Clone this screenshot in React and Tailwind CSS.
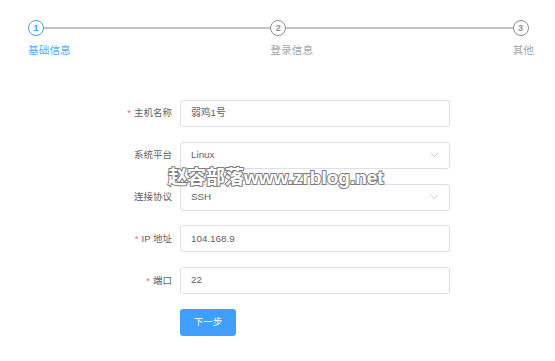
import React from "react";

const FONT = { fontFamily: '"Liberation Sans", "Noto Sans CJK SC", sans-serif' };

function Step({ n, title, active, last }) {
  const color = active ? "text-[#409EFF]" : "text-[#8e9096]";
  const border = active ? "border-[#409EFF]" : "border-[#8e9096]";
  return (
    <div className={last ? "shrink-0" : "flex-1"}>
      <div className="flex items-center h-[16px]">
        <div
          className={`w-[16px] h-[16px] shrink-0 rounded-full border-[1.5px] ${border} ${color} flex items-center justify-center text-[9px] font-semibold leading-none`}
        >
          {n}
        </div>
        {!last && <div className="flex-1 h-[1.4px] bg-[#c0c4cc]" />}
      </div>
      <div
        className={`mt-[6px] text-[10.7px] leading-[16px] whitespace-nowrap ${
          active ? "text-[#5aabff]" : "text-[#a3a6ab]"
        }`}
      >
        {title}
      </div>
    </div>
  );
}

function Chevron() {
  return (
    <svg width="9" height="6" viewBox="0 0 9 6" className="shrink-0">
      <path d="M0.8 1 L4.5 4.6 L8.2 1" fill="none" stroke="#c0c4cc" strokeWidth="0.9" />
    </svg>
  );
}

function Row({ label, required, children }) {
  return (
    <div className="flex items-center h-[27px]">
      <div className="w-[75px] pr-[8px] text-right text-[9.5px] text-[#606266] whitespace-nowrap">
        {required && <span className="text-[#F56C6C] mr-[3px]">*</span>}
        {label}
      </div>
      {children}
    </div>
  );
}

function Input({ value, select }) {
  return (
    <div className="w-[270px] h-[27px] border border-[#dcdfe6] rounded-[3px] px-[10px] flex items-center justify-between text-[9.8px] text-[#606266] bg-white">
      <span>{value}</span>
      {select && <Chevron />}
    </div>
  );
}

export default function App() {
  return (
    <div className="relative w-[555px] h-[361px] bg-white overflow-hidden" style={FONT}>
      <div className="flex pl-[28px] pr-[21px] pt-[20px]">
        <Step n="1" title="基础信息" active />
        <Step n="2" title="登录信息" />
        <Step n="3" title="其他" last />
      </div>

      <div className="mt-[42px] ml-[105px] flex flex-col gap-[14.8px]">
        <Row label="主机名称" required>
          <Input value="弱鸡1号" />
        </Row>
        <Row label="系统平台">
          <Input value="Linux" select />
        </Row>
        <Row label="连接协议">
          <Input value="SSH" select />
        </Row>
        <Row label="IP 地址" required>
          <Input value="104.168.9" />
        </Row>
        <Row label="端口" required>
          <Input value="22" />
        </Row>
        <div className="flex h-[27px]">
          <div className="w-[75px]" />
          <button className="w-[56px] h-[27px] rounded-[3px] bg-[#409EFF] text-white text-[9.5px]">
            下一步
          </button>
        </div>
      </div>

      <div className="absolute left-[168px] top-[168px] text-[19px] leading-[20px] font-bold text-white whitespace-nowrap [-webkit-text-stroke:2px_#7d7d7d] [paint-order:stroke_fill]">
        赵容部落www.zrblog.net
      </div>
    </div>
  );
}
